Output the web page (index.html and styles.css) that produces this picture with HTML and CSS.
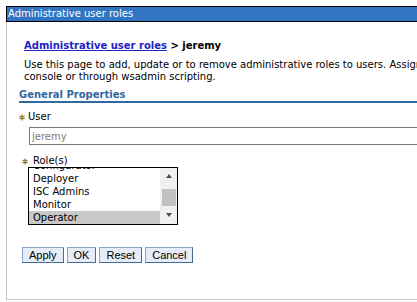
FILE: index.html
```html
<!DOCTYPE html>
<html lang="en">
<head>
    <meta charset="UTF-8">
    <title>Administrative user roles</title>
    <link rel="stylesheet" href="styles.css">
</head>
<body>
    <div class="page">
        <!-- Barre de titre -->
        <div class="title-bar">Administrative user roles</div>

        <div class="panel">
            <div class="breadcrumb"><a href="#">Administrative user roles</a> &gt; jeremy</div>
            <p class="description">Use this page to add, update or to remove administrative roles to users. Assigning administrative roles to users enables them to administer application servers through the administrative<br>console or through wsadmin scripting.</p>

            <h2 class="section-title">General Properties</h2>

            <!-- Champ utilisateur -->
            <div class="field-label user-label">
                <svg class="required" width="6" height="7" viewBox="0 0 6 7"><path d="M3 0.5V6.5M0.4 2L5.6 5M0.4 5L5.6 2" stroke="#8a7a34" stroke-width="1.3"/></svg>
                <span>User</span>
            </div>
            <input class="text-input" type="text" value="jeremy" disabled>

            <!-- Liste des rôles -->
            <div class="field-label role-label">
                <svg class="required" width="6" height="7" viewBox="0 0 6 7"><path d="M3 0.5V6.5M0.4 2L5.6 5M0.4 5L5.6 2" stroke="#8a7a34" stroke-width="1.3"/></svg>
                <span>Role(s)</span>
            </div>
            <div class="role-list">
                <div class="role-items">
                    <div class="role-item first">Configurator</div>
                    <div class="role-item">Deployer</div>
                    <div class="role-item">ISC Admins</div>
                    <div class="role-item">Monitor</div>
                    <div class="role-item selected">Operator</div>
                </div>
                <div class="scrollbar">
                    <div class="sb-btn"><span class="arrow-up"></span></div>
                    <div class="sb-thumb"></div>
                    <div class="sb-btn sb-down"><span class="arrow-down"></span></div>
                </div>
            </div>

            <!-- Boutons -->
            <div class="buttons">
                <button>Apply</button>
                <button>OK</button>
                <button>Reset</button>
                <button>Cancel</button>
            </div>
        </div>
    </div>
</body>
</html>
```

FILE: styles.css
```css
/* Style général */
html, body {
    margin: 0;
    padding: 0;
    background-color: #fff;
    overflow: hidden;
}

body {
    font-family: "DejaVu Sans", Verdana, sans-serif;
    font-size: 10px;
    color: #000;
}

.page {
    margin: 6px 0 0 6px;
}

/* Barre de titre */
.title-bar {
    height: 14px;
    line-height: 14px;
    padding-left: 1px;
    background-color: #3174c2;
    color: #fff;
    border: 1px solid #000;
    border-right: none;
    white-space: nowrap;
}

/* Panneau principal */
.panel {
    height: 277px;
    border-left: 1px solid #c8c8c8;
    border-bottom: 1px solid #c8c8c8;
    overflow: hidden;
}

.breadcrumb {
    margin: 17px 0 0 17px;
    line-height: 13px;
    font-weight: bold;
    white-space: nowrap;
}

.breadcrumb a {
    color: #2222c4;
}

.description {
    margin: 7px 0 0 17px;
    line-height: 12px;
    white-space: nowrap;
}

.section-title {
    margin: 6px 0 0 12px;
    font-size: 10px;
    line-height: 12px;
    color: #31669f;
    border-bottom: 2px solid #31669f;
}

/* Libellés */
.field-label {
    display: flex;
    align-items: center;
    line-height: 12px;
}

.user-label {
    margin: 8px 0 0 12px;
}

.user-label .required {
    margin-right: 3px;
}

.role-label {
    margin: 10px 0 0 15px;
}

.role-label .required {
    margin-right: 5px;
}

.text-input {
    display: block;
    box-sizing: border-box;
    width: 420px;
    height: 18px;
    margin: 4px 0 0 22px;
    padding: 0 2px;
    border: 1px solid #7a7a7a;
    background-color: #fff;
    color: #7d7d7d;
    font-family: inherit;
    font-size: 10px;
}

/* Liste des rôles */
.role-list {
    display: flex;
    box-sizing: border-box;
    width: 150px;
    height: 58px;
    margin-left: 21px;
    border: 1px solid #000;
    overflow: hidden;
}

.role-items {
    flex: 1;
}

.role-item {
    height: 13px;
    line-height: 13px;
    padding-left: 4px;
    white-space: nowrap;
}

.role-item.first {
    margin-top: -9px;
}

.role-item.selected {
    background-color: #c8c8c8;
}

.scrollbar {
    display: flex;
    flex-direction: column;
    width: 17px;
    background-color: #f0f0f0;
}

.sb-btn {
    display: flex;
    align-items: center;
    justify-content: center;
    height: 16px;
}

.sb-down {
    flex: 1;
}

.sb-thumb {
    height: 17px;
    margin: 5px 1px 0 2px;
    background-color: #c1c1c1;
}

.arrow-up,
.arrow-down {
    width: 0;
    height: 0;
    border-left: 3.5px solid transparent;
    border-right: 3.5px solid transparent;
}

.arrow-up {
    border-bottom: 4px solid #505050;
}

.arrow-down {
    border-top: 4px solid #505050;
}

/* Boutons */
.buttons {
    display: flex;
    gap: 3px;
    margin: 22px 0 0 15px;
}

.buttons button {
    height: 16px;
    padding: 0 6px;
    background-color: #e6edf8;
    border: 1px solid;
    border-color: #8aa4c6 #48698f #48698f #8aa4c6;
    font-family: "Liberation Sans", Arial, sans-serif;
    font-size: 11px;
    line-height: 14px;
    color: #000;
}
```
